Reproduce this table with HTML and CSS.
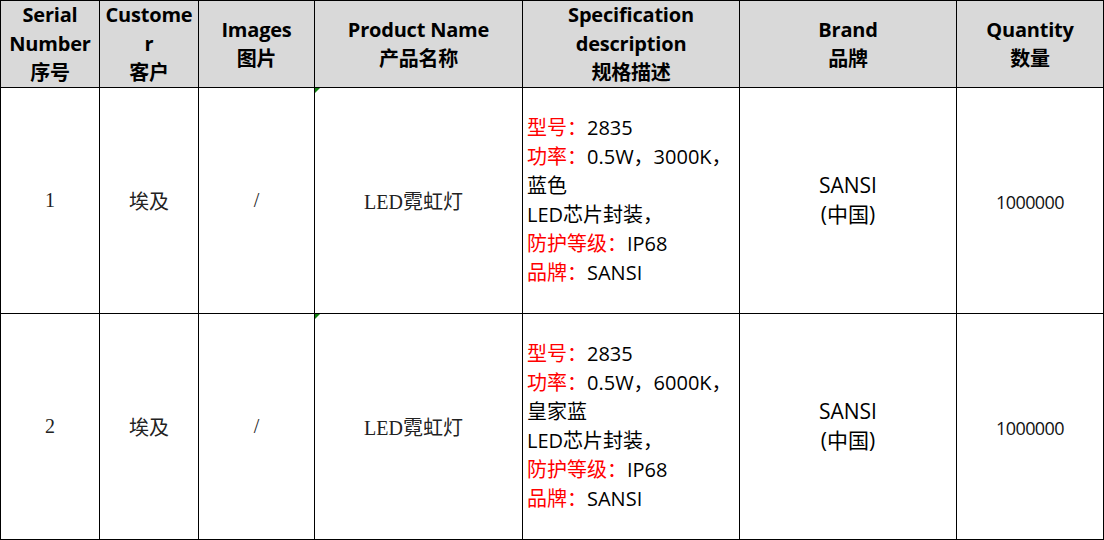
FILE: index.html
```html
<!DOCTYPE html>
<html lang="zh">
<head>
<meta charset="utf-8">
<title>Product table</title>
<link rel="stylesheet" href="styles.css">
</head>
<body>
<div class="sheet">
  <div class="cell head"><span>Serial<br>Number<br>序号</span></div>
  <div class="cell head"><span>Custome<br>r<br>客户</span></div>
  <div class="cell head"><span>Images<br>图片</span></div>
  <div class="cell head"><span>Product Name<br>产品名称</span></div>
  <div class="cell head"><span>Specification<br>description<br>规格描述</span></div>
  <div class="cell head"><span>Brand<br>品牌</span></div>
  <div class="cell head"><span>Quantity<br>数量</span></div>

  <div class="cell serif">1</div>
  <div class="cell serif">埃及</div>
  <div class="cell serif">/</div>
  <div class="cell serif noted">LED霓虹灯</div>
  <div class="cell spec">
    <div><span class="red">型号：</span>2835</div>
    <div><span class="red">功率：</span>0.5W，3000K，</div>
    <div>蓝色</div>
    <div>LED芯片封装，</div>
    <div><span class="red">防护等级：</span>IP68</div>
    <div><span class="red">品牌：</span>SANSI</div>
  </div>
  <div class="cell brand"><span>SANSI<br>(中国)</span></div>
  <div class="cell qty">1000000</div>

  <div class="cell serif">2</div>
  <div class="cell serif">埃及</div>
  <div class="cell serif">/</div>
  <div class="cell serif noted">LED霓虹灯</div>
  <div class="cell spec">
    <div><span class="red">型号：</span>2835</div>
    <div><span class="red">功率：</span>0.5W，6000K，</div>
    <div>皇家蓝</div>
    <div>LED芯片封装，</div>
    <div><span class="red">防护等级：</span>IP68</div>
    <div><span class="red">品牌：</span>SANSI</div>
  </div>
  <div class="cell brand"><span>SANSI<br>(中国)</span></div>
  <div class="cell qty">1000000</div>
</div>
</body>
</html>
```
FILE: styles.css
```css
html, body {
  margin: 0;
  padding: 0;
  background: #ffffff;
}

.sheet {
  display: grid;
  grid-template-columns: 98px 98px 115px 207px 216px 216px 146px;
  grid-template-rows: 86px 225px 225px;
  gap: 1px;
  padding: 1px;
  background: #000000;
  width: 1104px;
  height: 540px;
  box-sizing: border-box;
}

.cell {
  background: #ffffff;
  display: flex;
  align-items: center;
  justify-content: center;
  text-align: center;
  color: #000000;
  position: relative;
  overflow: hidden;
}

.head {
  background: #d9d9d9;
  font-family: "Open Sans", "Noto Sans CJK SC", sans-serif;
  font-weight: 700;
  font-size: 20px;
  line-height: 29px;
  letter-spacing: -0.2px;
  padding-bottom: 1px;
}

.serif {
  font-family: "Liberation Serif", "Noto Sans CJK SC", serif;
  font-size: 20px;
  color: #222222;
}

.noted {
  padding-right: 10px;
}

.noted::before {
  content: "";
  position: absolute;
  left: 0;
  top: 0;
  width: 0;
  height: 0;
  border-top: 5px solid #108010;
  border-right: 5px solid transparent;
}

.spec {
  flex-direction: column;
  align-items: flex-start;
  justify-content: center;
  text-align: left;
  padding-left: 4px;
  padding-bottom: 2px;
  font-family: "Open Sans", "Noto Sans CJK SC", sans-serif;
  font-size: 20px;
  line-height: 29px;
}

.red {
  color: #ff0000;
}

.brand {
  font-family: "Open Sans", "Noto Sans CJK SC", sans-serif;
  font-size: 21px;
  line-height: 29px;
  padding-bottom: 2px;
}

.qty {
  font-family: "Open Sans", "Noto Sans CJK SC", sans-serif;
  font-size: 18px;
  letter-spacing: -0.6px;
  color: #111111;
  padding-top: 2px;
}
```
